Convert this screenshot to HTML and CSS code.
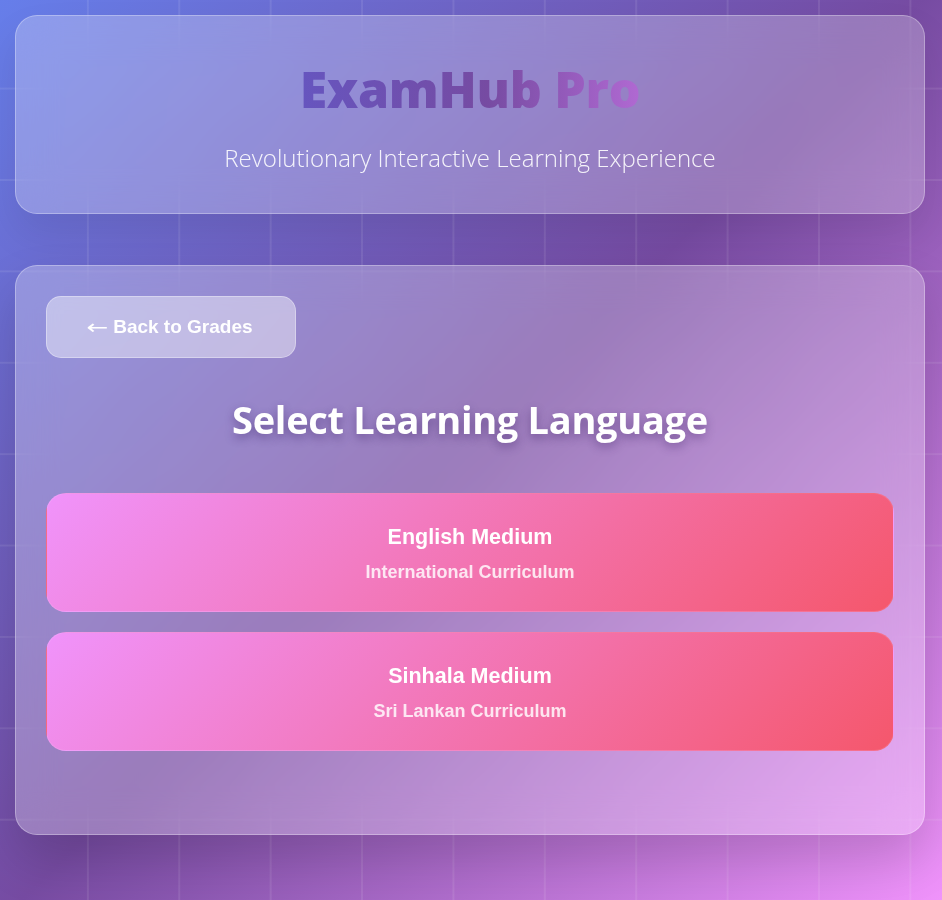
FILE: index.html
```html
<!DOCTYPE html>
<html lang="en">
<head>
<meta charset="utf-8">
<title>ExamHub Pro</title>
<link rel="stylesheet" href="styles.css">
</head>
<body>
<div class="grid-bg"></div>
<div class="container">
  <header class="hero">
    <h1 class="brand">ExamHub Pro</h1>
    <p class="tagline">Revolutionary Interactive Learning Experience</p>
  </header>
  <main class="panel">
    <button class="back-btn"><span class="arrow">←</span> Back to Grades</button>
    <h2 class="panel-title">Select Learning Language</h2>
    <div class="lang-list">
      <div class="lang-card">
        <div class="lang-name">English Medium</div>
        <div class="lang-desc">International Curriculum</div>
      </div>
      <div class="lang-card">
        <div class="lang-name">Sinhala Medium</div>
        <div class="lang-desc">Sri Lankan Curriculum</div>
      </div>
    </div>
  </main>
</div>
</body>
</html>
```
FILE: styles.css
```css
* { box-sizing: border-box; }
html, body { margin: 0; padding: 0; }
body {
  min-height: 900px;
  background: linear-gradient(135deg, #667eea 0%, #764ba2 50%, #f093fb 100%);
  font-family: "Liberation Sans", Arial, sans-serif;
  color: #fff;
  overflow: hidden;
}
.grid-bg {
  position: fixed;
  inset: 0;
  background-image:
    linear-gradient(90deg, rgba(255,255,255,0.09) 1.5px, transparent 1.5px),
    linear-gradient(180deg, rgba(255,255,255,0.09) 1.5px, transparent 1.5px);
  background-size: 91.4px 91.4px;
  background-position: -4.5px -3.8px;
  pointer-events: none;
}
.container {
  position: relative;
  padding: 15px 17px 15px 15px;
}
.hero {
  background: rgba(255,255,255,0.25);
  border: 1px solid rgba(255,255,255,0.3);
  border-radius: 22px;
  box-shadow: 0 20px 40px rgba(0,0,0,0.08);
  -webkit-backdrop-filter: blur(20px);
  backdrop-filter: blur(20px);
  text-align: center;
  padding: 40px 20px 38px;
  margin-bottom: 51px;
}
.brand {
  margin: 0;
  font-family: "Open Sans", "Noto Sans", sans-serif;
  font-weight: 800;
  font-size: 50px;
  line-height: 66px;
  letter-spacing: -0.3px;
  background: linear-gradient(90deg, #6655bf 0%, #764ba2 55%, #b069d2 100%);
  -webkit-background-clip: text;
  background-clip: text;
  color: transparent;
  display: inline-block;
}
.tagline {
  margin: 19px 0 0;
  font-family: "Open Sans", "Noto Sans", sans-serif;
  font-weight: 300;
  font-size: 24px;
  line-height: 34px;
  color: rgba(255,255,255,0.9);
}
.panel {
  background: rgba(255,255,255,0.27);
  border: 1px solid rgba(255,255,255,0.3);
  border-radius: 22px;
  box-shadow: 0 25px 50px rgba(0,0,0,0.15);
  -webkit-backdrop-filter: blur(20px);
  backdrop-filter: blur(20px);
  padding: 30px 30px 83px;
  min-height: 570px;
}
.back-btn {
  display: flex;
  align-items: center;
  justify-content: center;
  gap: 5px;
  width: 250px;
  height: 62px;
  background: rgba(255,255,255,0.42);
  border: 1px solid rgba(255,255,255,0.35);
  border-radius: 15px;
  color: #fff;
  font-family: "Liberation Sans", Arial, sans-serif;
  font-weight: 700;
  font-size: 19px;
  cursor: pointer;
  padding: 0;
}
.arrow {
  font-family: "DejaVu Sans", sans-serif;
  font-weight: 400;
  font-size: 20px;
  transform: scaleX(1.3);
  display: inline-block;
  margin-right: 2px;
}
.panel-title {
  margin: 40px 0 52px;
  text-align: center;
  font-family: "Open Sans", "Noto Sans", sans-serif;
  font-weight: 700;
  font-size: 38px;
  line-height: 43px;
  letter-spacing: -0.3px;
  color: #fff;
  text-shadow: 0 4px 10px rgba(60,30,100,0.45);
}
.lang-list {
  display: flex;
  flex-direction: column;
  gap: 20px;
}
.lang-card {
  background: linear-gradient(135deg, #f093fb 0%, #f5576c 100%);
  border: 1px solid rgba(255,255,255,0.1);
  border-radius: 20px;
  text-align: center;
  padding: 30px 20px 28px;
  height: 119px;
}
.lang-name {
  font-weight: 700;
  font-size: 21.5px;
  line-height: 26px;
  margin-bottom: 11px;
}
.lang-desc {
  font-weight: 700;
  font-size: 18px;
  line-height: 22px;
  color: rgba(255,255,255,0.82);
}
```
